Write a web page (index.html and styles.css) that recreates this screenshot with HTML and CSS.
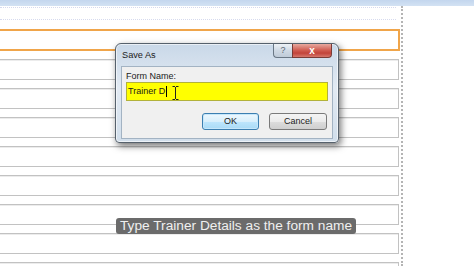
FILE: index.html
```html
<!DOCTYPE html>
<html>
<head>
	<title>Save As</title>
	<link rel="stylesheet" href="styles.css">
</head>
<body>
  <div class="topbar"></div>
  <div class="sheet">
    <div class="guide"></div>
    <div class="guide second"></div>
    <div class="fields">
      <div class="field active"></div>
      <div class="field"></div>
      <div class="field"></div>
      <div class="field"></div>
      <div class="field"></div>
      <div class="field"></div>
      <div class="field"></div>
      <div class="field"></div>
      <div class="field"></div>
    </div>
  </div>

  <!-- Save As dialog over the form -->
  <div class="dialog">
    <div class="titlebar">
      <span class="title">Save As</span>
      <span class="help">?</span>
      <span class="close">x</span>
    </div>
    <div class="panel">
      <div class="label">Form Name:</div>
      <div class="input">
        <span>Trainer D</span><span class="caret"></span>
        <svg class="ibeam" width="7" height="14" viewBox="0 0 7 14">
          <path d="M0.5 0.5h2.5M4 0.5h2.5M3.5 1v12M0.5 13.5h2.5M4 13.5h2.5" stroke="#222" stroke-width="1" fill="none"/>
        </svg>
      </div>
      <div class="buttons">
        <span class="btn ok">OK</span>
        <span class="btn">Cancel</span>
      </div>
    </div>
  </div>

  <div class="caption">Type Trainer Details as the form name</div>
</body>
</html>
```

FILE: styles.css
```css
body {
  margin: 0;
  background: #ffffff;
  overflow: hidden;
  font-family: "Liberation Sans", Arial, sans-serif;
}

.topbar {
  height: 6px;
  background: linear-gradient(#c3d6ee, #d3e2f3);
}

.sheet {
  width: 401px;
  height: 260px;
  border-right: 2px dotted #b4b4b4;
  overflow: hidden;
}

.guide {
  margin-top: 1px;
  height: 0;
  width: 396px;
  border-top: 1px dotted #d6daee;
}
.guide.second {
  margin-top: 11px;
}

.fields {
  margin-top: 9px;
  margin-left: -4px;
  width: 404px;
  display: flex;
  flex-direction: column;
  gap: 8px;
}

.field {
  flex: none;
  height: 21px;
  margin-right: 1px;
  box-sizing: border-box;
  border: 1px solid #c2c2c2;
  box-shadow: inset 1px 1px 0 #ececec;
}
.field.active {
  height: 22px;
  margin-right: 0;
  border: 2px solid #f0a54a;
  box-shadow: none;
}

/* dialog */
.dialog {
  position: absolute;
  left: 115px;
  top: 43px;
  width: 224px;
  height: 100px;
  box-sizing: border-box;
  border: 1px solid #56616c;
  border-radius: 6px 6px 4px 4px;
  background: linear-gradient(#c9d8e8, #e2eaf3 45%, #d1deeb);
  box-shadow: 2px 3px 7px rgba(0,0,0,0.55), inset 0 0 0 1px rgba(255,255,255,0.6);
  padding: 0 5px 3px 5px;
  display: flex;
  flex-direction: column;
  font-size: 9px;
  color: #1b1b1b;
}

.titlebar {
  height: 22px;
  display: flex;
}
.title {
  flex: 1;
  padding-left: 1px;
  align-self: center;
  font-size: 9.2px;
}
.help, .close {
  height: 14px;
  box-sizing: border-box;
  text-align: center;
  line-height: 13px;
  border: 1px solid #6a7785;
  border-top: none;
}
.help {
  width: 19px;
  color: #5c6773;
  font-size: 9px;
  border-right: none;
  border-radius: 0 0 0 4px;
  background: linear-gradient(#eef2f6, #cfd9e4 50%, #bfcbd8);
}
.close {
  width: 40px;
  margin-right: 1px;
  color: #ffffff;
  font-weight: bold;
  font-size: 10px;
  border-color: #7a3b36;
  border-radius: 0 0 4px 0;
  background: linear-gradient(#e7a99f, #cf5a4f 50%, #c2433a 70%, #d6776c);
}

.panel {
  flex: 1;
  border: 1px solid #a3b3c3;
  background: #f0f0f0;
  padding: 3px 4px 8px 4px;
  display: flex;
  flex-direction: column;
}
.label {
  line-height: 12px;
}
.input {
  position: relative;
  height: 19px;
  box-sizing: border-box;
  border: 1px solid #b2b23a;
  background: #ffff00;
  padding-left: 1px;
  line-height: 17px;
  display: flex;
  align-items: center;
}
.caret {
  width: 1px;
  height: 11px;
  margin-left: 1px;
  background: #000000;
}
.ibeam {
  position: absolute;
  left: 45px;
  top: 3px;
}

.buttons {
  margin-top: 12px;
  display: flex;
  justify-content: flex-end;
  gap: 10px;
  padding-right: 1px;
}
.btn {
  width: 58px;
  height: 17px;
  box-sizing: border-box;
  border: 1px solid #7a7a7a;
  border-radius: 3px;
  text-align: center;
  line-height: 15px;
  background: linear-gradient(#f4f4f4, #ebebeb 50%, #dddddd 51%, #cfcfcf);
}
.btn.ok {
  width: 57px;
  border-color: #3c7fb1;
  background: linear-gradient(#eef8fe, #d8effc 50%, #bee6fd 51%, #a9dbf6);
  box-shadow: inset 0 0 0 1px #c6e7fb;
}

.caption {
  position: absolute;
  left: 116px;
  top: 218px;
  height: 16px;
  padding: 0 4px;
  border-radius: 3px;
  background: #6b6b6b;
  color: #f0f0f0;
  font-size: 13.7px;
  line-height: 16px;
  white-space: nowrap;
}
```
